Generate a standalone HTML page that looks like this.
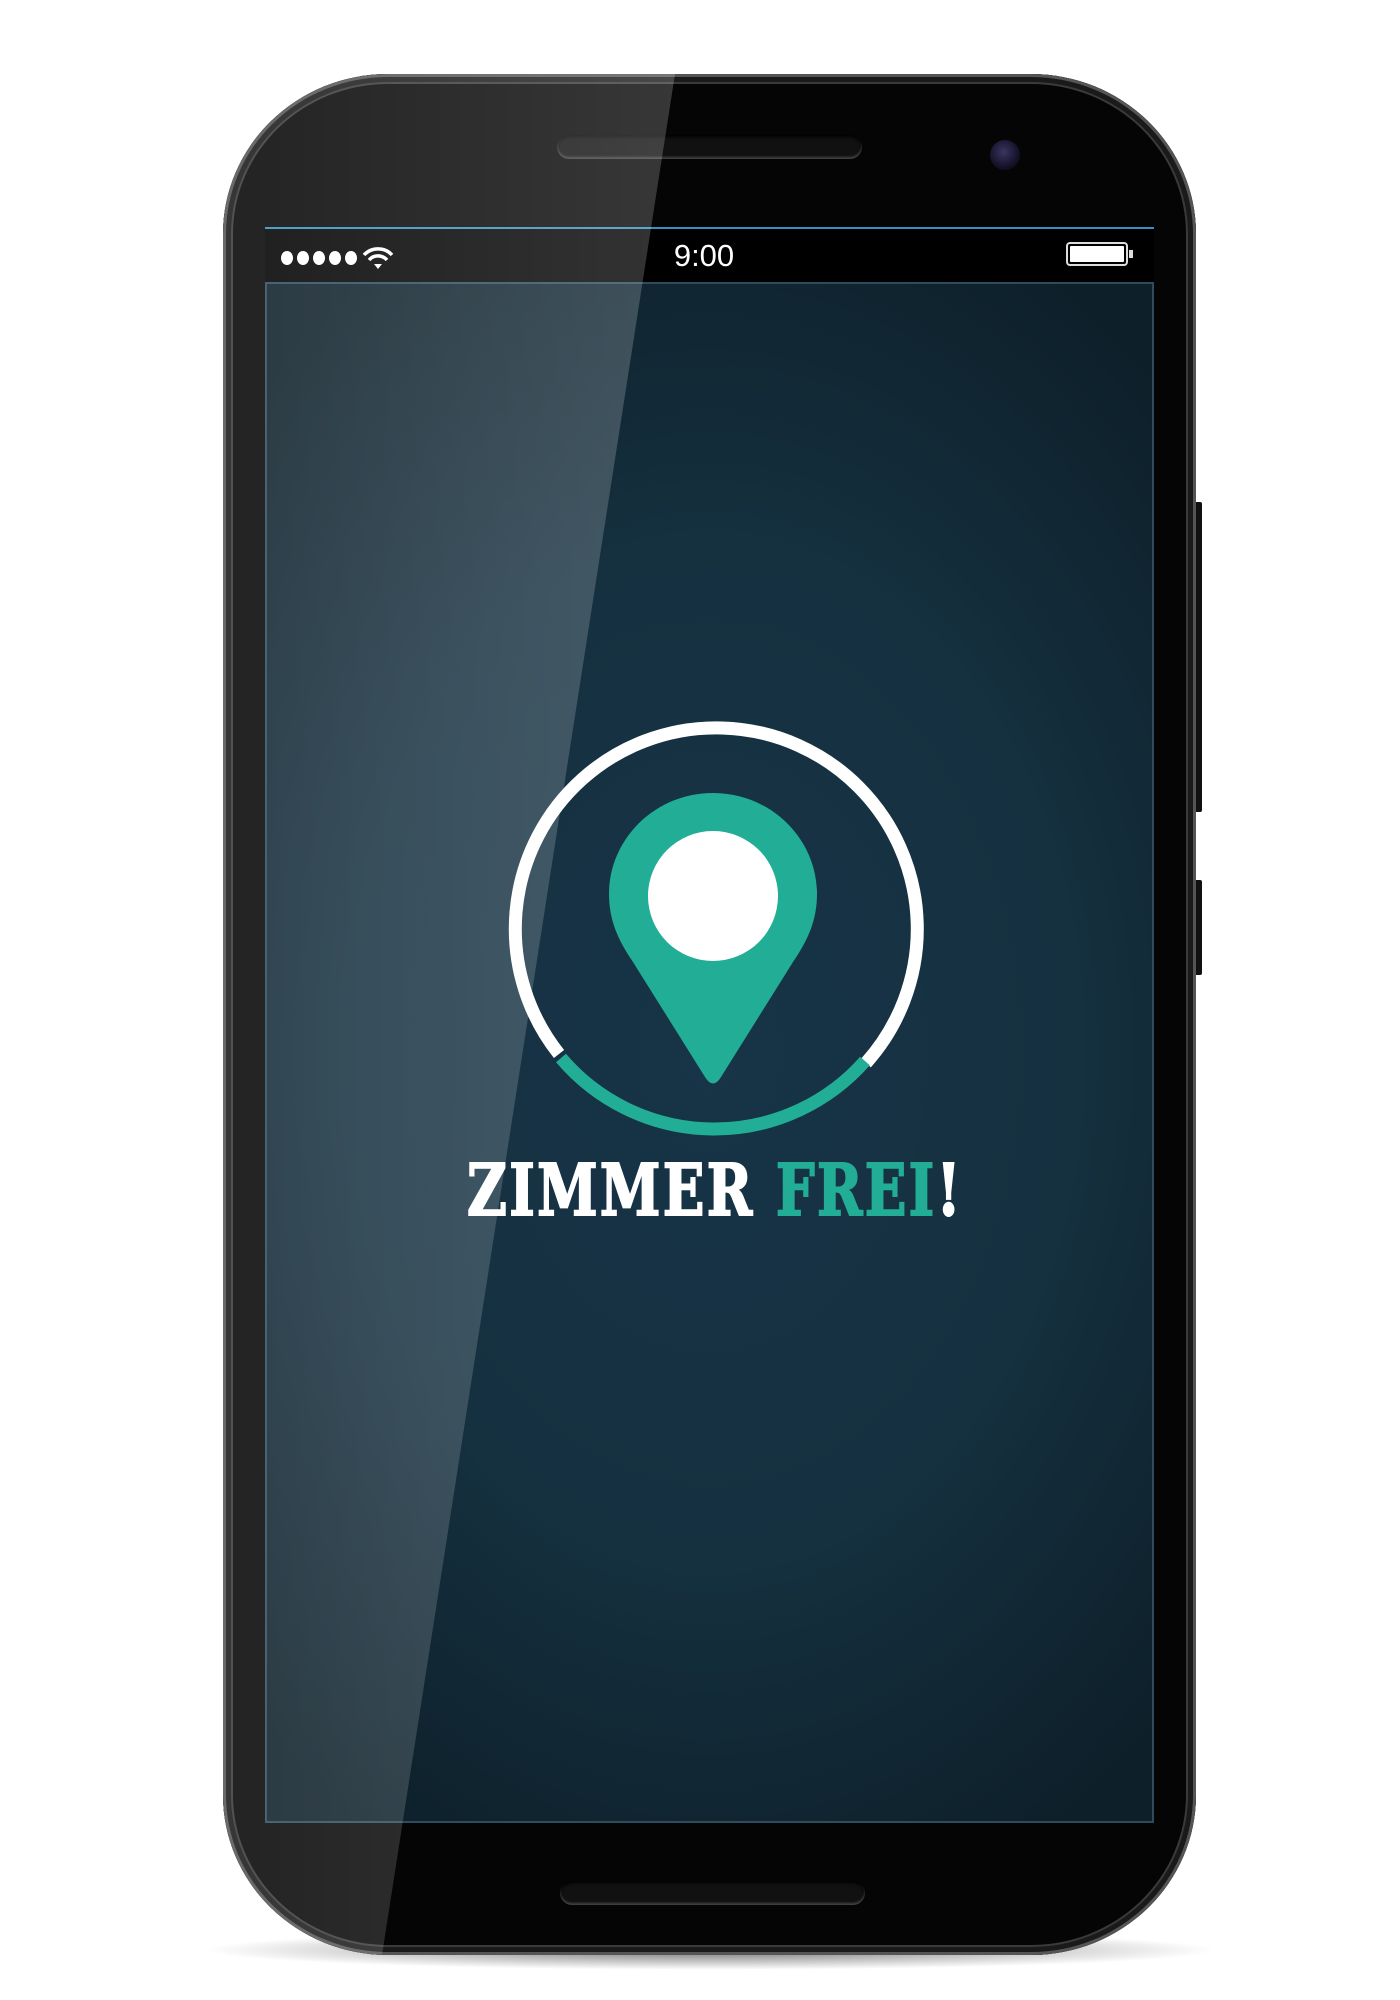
<!DOCTYPE html>
<html><head><meta charset="utf-8"><style>
html,body{margin:0;padding:0;background:#fff;}
body{width:1400px;height:2000px;position:relative;overflow:hidden;font-family:"Liberation Sans",sans-serif;}
.abs{position:absolute;}
</style></head><body>
<div class="abs" style="left:200px;top:1930px;width:1020px;height:40px;border-radius:50%;background:radial-gradient(ellipse at center,rgba(0,0,0,.55),rgba(0,0,0,0) 70%);"></div>
<div class="abs" style="left:1194px;top:502px;width:8px;height:310px;background:#111;border-radius:2px;"></div>
<div class="abs" style="left:1194px;top:880px;width:8px;height:95px;background:#111;border-radius:2px;"></div>
<div class="abs" style="left:223px;top:74px;width:973px;height:1881px;border-radius:165px/160px;background:#050505;box-shadow:inset 0 0 0 3px #555,inset 0 0 0 8px #1a1a1a,inset 0 0 0 10px #3a3a3a;"></div>
<div class="abs" style="left:557px;top:135px;width:305px;height:24px;border-radius:12px;background:#111;box-shadow:inset 0 -2px 2px #444,inset 0 2px 3px #000;"></div>
<div class="abs" style="left:990px;top:140px;width:30px;height:30px;border-radius:50%;background:radial-gradient(circle at 45% 40%,#3a3560,#15122a 60%,#050505);"></div>
<div class="abs" style="left:560px;top:1881px;width:305px;height:24px;border-radius:12px;background:#111;box-shadow:inset 0 -2px 2px #444,inset 0 2px 3px #000;"></div>
<div class="abs" style="left:265px;top:227px;width:889px;height:1596px;background:#000;border-top:2px solid #3a8fc0;box-sizing:border-box;"></div>
<div class="abs" style="left:265px;top:282px;width:889px;height:1541px;background:radial-gradient(ellipse 75% 60% at 50% 50%,#173448 0%,#15303f 55%,#0d1f29 100%);border:2px solid #2d4c5c;box-sizing:border-box;"></div>
<div class="abs" style="left:280px;top:246px;">
 <svg width="140" height="24" viewBox="0 0 140 24">
  <g fill="#fff"><ellipse cx="7" cy="12" rx="6" ry="7"/><ellipse cx="23" cy="12" rx="6" ry="7"/><ellipse cx="39" cy="12" rx="6" ry="7"/><ellipse cx="55" cy="12" rx="6" ry="7"/><ellipse cx="71" cy="12" rx="6" ry="7"/></g>
  <g fill="none" stroke="#fff" stroke-width="3.5"><path d="M84 9 A 19 19 0 0 1 112 9"/><path d="M89 14 A 12 12 0 0 1 107 14"/></g>
  <path d="M94 18 L98 23 L102 18 Z" fill="#fff"/>
 </svg>
</div>
<div class="abs" style="left:654px;top:238px;width:100px;text-align:center;color:#fff;font-size:31px;line-height:36px;">9:00</div>
<div class="abs" style="left:1066px;top:242px;width:62px;height:24px;border:2px solid #ddd;border-radius:4px;box-sizing:border-box;padding:2px;"><div style="width:100%;height:100%;background:#fff;border-radius:1px;"></div></div>
<div class="abs" style="left:1129px;top:250px;width:4px;height:8px;background:#ddd;"></div>
<svg class="abs" style="left:0;top:0;" width="1400" height="2000" viewBox="0 0 1400 2000">
 <g fill="none" stroke-width="13">
  <path d="M 559 1054 A 201 201 0 1 1 866 1063" stroke="#fff"/>
  <path d="M 865 1061 A 201 201 0 0 1 561 1058" stroke="#22ae96"/>
 </g>
 <path d="M713 793 C 655 793 609 839 609 894 C 609 920 618 940 633 962 L 705 1077 Q 713 1090 721 1077 L 793 962 C 808 940 817 920 817 894 C 817 839 771 793 713 793 Z" fill="#22ae96"/>
 <circle cx="713" cy="896" r="65" fill="#fff"/>
</svg>
<div class="abs" style="left:467px;top:1150px;width:490px;height:80px;overflow:visible;">
 <div style="position:absolute;left:0;top:0;white-space:nowrap;font-family:'DejaVu Serif','Liberation Serif',serif;font-weight:bold;font-size:71px;line-height:80px;letter-spacing:3px;transform-origin:0 0;transform:scaleX(0.77);color:#fff;-webkit-text-stroke:2px #fff;">ZIMMER <span style="color:#22ae96;-webkit-text-stroke:2px #22ae96;">FREI</span>!</div>
</div>
<div class="abs" style="left:223px;top:74px;width:973px;height:1881px;border-radius:165px/160px;overflow:hidden;">
<svg width="973" height="1881" style="display:block">
 <defs><linearGradient id="g" x1="0" y1="0" x2="1" y2="0"><stop offset="0" stop-color="#fff" stop-opacity="0.12"/><stop offset="1" stop-color="#fff" stop-opacity="0.2"/></linearGradient></defs>
 <path d="M 0 0 L 452 0 L 159 1881 L 0 1881 Z" fill="url(#g)"/>
</svg>
</div>
</body></html>
